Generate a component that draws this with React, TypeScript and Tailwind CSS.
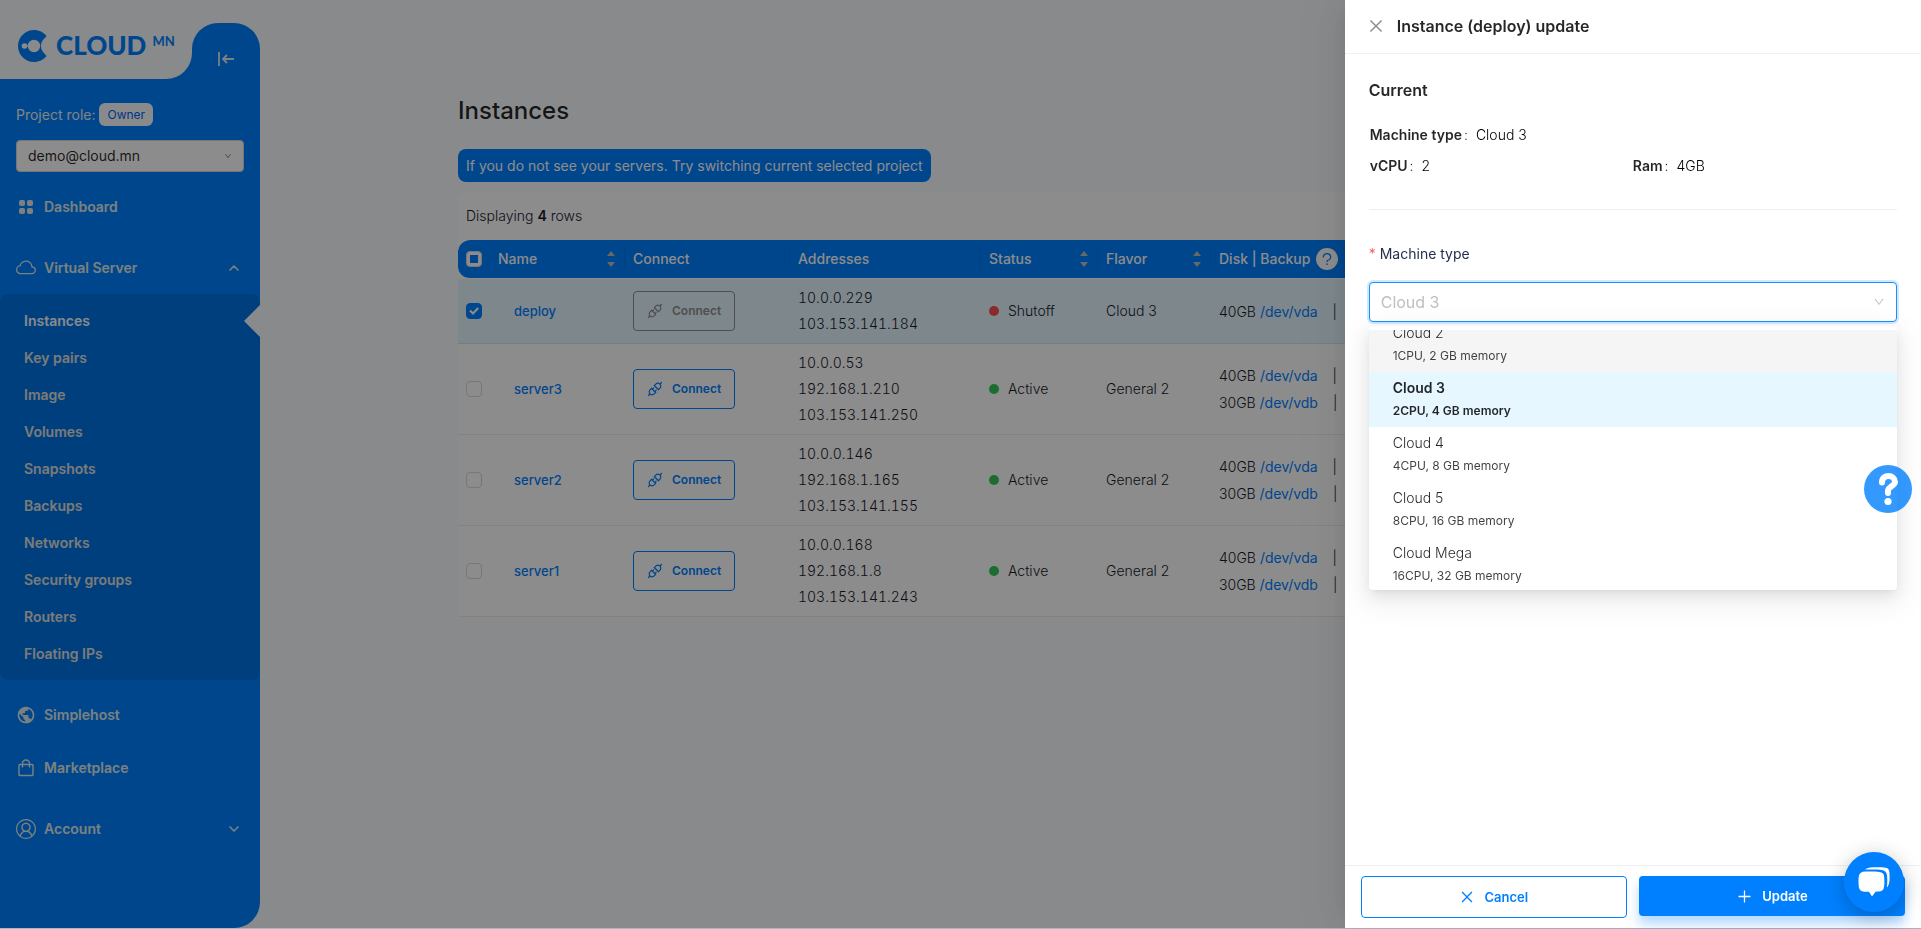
import type { ReactNode } from 'react';
import { AiOutlineApi, AiOutlineClose, AiOutlineDown, AiOutlinePlus, AiOutlineQuestion } from 'react-icons/ai';
import { BsCloud } from 'react-icons/bs';
import { MdPublic } from 'react-icons/md';
import { VscAccount } from 'react-icons/vsc';
import { ChevronDown, ChevronUp } from 'lucide-react';

type Server = {
  name: string;
  addresses: string[];
  status: 'Shutoff' | 'Active';
  flavor: string;
  disks: [string, string][];
  checked: boolean;
};

const oneDisk: [string, string][] = [['40GB', '/dev/vda']];
const twoDisks: [string, string][] = [['40GB', '/dev/vda'], ['30GB', '/dev/vdb']];

const servers: Server[] = [
  { name: 'deploy', addresses: ['10.0.0.229', '103.153.141.184'], status: 'Shutoff', flavor: 'Cloud 3', disks: oneDisk, checked: true },
  { name: 'server3', addresses: ['10.0.0.53', '192.168.1.210', '103.153.141.250'], status: 'Active', flavor: 'General 2', disks: twoDisks, checked: false },
  { name: 'server2', addresses: ['10.0.0.146', '192.168.1.165', '103.153.141.155'], status: 'Active', flavor: 'General 2', disks: twoDisks, checked: false },
  { name: 'server1', addresses: ['10.0.0.168', '192.168.1.8', '103.153.141.243'], status: 'Active', flavor: 'General 2', disks: twoDisks, checked: false },
];

const serverPages = ['Instances', 'Key pairs', 'Image', 'Volumes', 'Snapshots', 'Backups', 'Networks', 'Security groups', 'Routers', 'Floating IPs'];

const machines = [
  { name: 'Cloud 2', detail: '1CPU, 2 GB memory' },
  { name: 'Cloud 3', detail: '2CPU, 4 GB memory' },
  { name: 'Cloud 4', detail: '4CPU, 8 GB memory' },
  { name: 'Cloud 5', detail: '8CPU, 16 GB memory' },
  { name: 'Cloud Mega', detail: '16CPU, 32 GB memory' },
];

function Logo() {
  return (
    <a href="#" className="flex items-center text-[#0080ff]">
      <svg width="30" height="32" viewBox="0 0 30 32" aria-hidden="true">
        <path fill="currentColor" d="M16 0C7.2 0 0 7.200 0 16s7.200 16 16 16c5 0 9.600-2.300 12.600-6l-3.600-4a9.500 9.500 0 0 1 0-12l3.600-4C25.600 2.300 21 0 16 0z" />
        <circle cx="16" cy="16" r="6.200" fill="#f9fbff" />
        <circle cx="6.500" cy="16" r="2.800" fill="#f9fbff" />
        <path d="M9 16h2" stroke="#f9fbff" strokeWidth="1" />
      </svg>
      <span className="ml-2 pb-0.5 font-[Lato] text-[26px] leading-8 font-black">CLOUD</span>
      <span className="ml-1.5 self-start font-[Lato] text-[13px] leading-6 font-bold">MN</span>
    </a>
  );
}

function DashboardIcon() {
  return (
    <svg width="14" height="14" viewBox="0 0 14 14" fill="currentColor" aria-hidden="true">
      <rect width="6" height="6" rx="2" />
      <rect x="8" width="6" height="6" rx="2" />
      <rect y="8" width="6" height="6" rx="2" />
      <rect x="8" y="8" width="6" height="6" rx="2" />
    </svg>
  );
}

function BagIcon() {
  return (
    <svg width="16" height="18" viewBox="0 0 16 18" fill="none" stroke="currentColor" strokeWidth="1.400" aria-hidden="true">
      <rect x="1" y="5.500" width="14" height="11" rx="0.800" />
      <path d="M4.500 8.500V4.500a3.500 3.500 0 0 1 7 0v4" />
    </svg>
  );
}

function NavItem({ icon, label, open }: { icon: ReactNode; label: string; open?: boolean }) {
  return (
    <a href="#" className="flex h-10 items-center px-4 font-semibold text-[#e0ecea]">
      <span className="flex w-5 justify-center">{icon}</span>
      <span className="ml-2 flex-1">{label}</span>
      {open === true && <ChevronUp size={16} strokeWidth={2.5} className="mr-0.5" />}
      {open === false && <ChevronDown size={16} strokeWidth={2.5} className="mr-0.5" />}
    </a>
  );
}

function Sidebar() {
  return (
    <aside className="flex w-[260px] shrink-0 flex-col">
      <div className="flex">
        <div className="flex-1 bg-[#0080ff]">
          <div className="flex h-[79px] items-end rounded-br-[26px] bg-[#f9fbff] pb-4 pl-[18px]">
            <Logo />
          </div>
        </div>
        <div className="w-[68px] bg-[#f9fbff] pt-[23px]">
          <button aria-label="Collapse menu" className="flex h-14 w-full items-end justify-center rounded-t-[26px] bg-[#0080ff] pb-[13px] text-[#e0ecea]">
            <svg width="16" height="14" viewBox="0 0 16 14" fill="none" stroke="currentColor" strokeWidth="1.800" aria-hidden="true">
              <path d="M1 0v14M16 7H5.500M9 3L5 7l4 4" />
            </svg>
          </button>
        </div>
      </div>
      <div className="flex-1 rounded-br-[26px] bg-[#0080ff] pt-6">
        <div className="flex items-center px-4">
          <span className="text-[#ecf0f4]">Project role:</span>
          <span className="ml-1 rounded-md bg-[#f9fbff] px-2 text-xs leading-[23px] text-[#0062f5]">Owner</span>
        </div>
        <div className="mx-4 mt-[14px] grid items-center">
          <select aria-label="Project" className="h-8 appearance-none rounded border border-[#d9d9d9] bg-white px-[11px] text-black/85 [grid-area:1/1]">
            <option>demo@cloud.mn</option>
          </select>
          <AiOutlineDown size={8} className="pointer-events-none mr-3 justify-self-end text-black/50 [grid-area:1/1]" />
        </div>
        <nav>
          <div className="mt-[15px]"><NavItem icon={<DashboardIcon />} label="Dashboard" /></div>
          <div className="mt-[21px]"><NavItem icon={<BsCloud size={20} />} label="Virtual Server" open={true} /></div>
          <ul className="mt-[6px] rounded-lg bg-[#0074e6] py-2">
            {serverPages.map((page) => (
              <li key={page} className="flex h-[37px] items-center justify-between overflow-hidden">
                <a href="#" className={page === 'Instances' ? 'pl-6 font-semibold text-[#f9fbff]' : 'pl-6 font-semibold text-[#e0e0dc]'}>{page}</a>
                {page === 'Instances' && (
                  <svg width="16" height="32" viewBox="0 0 16 32" fill="#f9fbff" aria-hidden="true"><path d="M16 0v32L0 16z" /></svg>
                )}
              </li>
            ))}
          </ul>
          <div className="mt-[15px]"><NavItem icon={<MdPublic size={20} />} label="Simplehost" /></div>
          <div className="mt-[13px]"><NavItem icon={<BagIcon />} label="Marketplace" /></div>
          <div className="mt-[21px]"><NavItem icon={<VscAccount size={20} />} label="Account" open={false} /></div>
        </nav>
      </div>
    </aside>
  );
}

function Sorter() {
  return (
    <svg width="8" height="16" viewBox="0 0 8 16" fill="#bfbfbf" aria-hidden="true">
      <path d="M4 0l4 5H0zM4 16l4-5H0z" />
    </svg>
  );
}

function HeaderCell({ children, sortable = false, divider = true }: { children: ReactNode; sortable?: boolean; divider?: boolean }) {
  return (
    <th className="p-0 font-medium">
      <div className={divider ? 'flex h-[22px] items-center justify-between border-r border-black/5 pr-[9px] pl-2 whitespace-nowrap' : 'flex h-[22px] items-center px-2 whitespace-nowrap'}>
        {children}
        {sortable && <Sorter />}
      </div>
    </th>
  );
}

function InstanceTable() {
  return (
    <table className="w-full table-fixed border-separate border-spacing-0 text-left">
      <colgroup>
        <col className="w-8" />
        <col className="w-[135px]" />
        <col className="w-[165px]" />
        <col className="w-[191px]" />
        <col className="w-[117px]" />
        <col className="w-[113px]" />
        <col />
      </colgroup>
      <thead>
        <tr className="h-[39px] text-white [&>th]:border-b [&>th]:border-transparent [&>th]:bg-[#0080ff] [&>th]:bg-clip-padding">
          <th className="rounded-l-xl p-0 pl-2">
            <span className="grid size-4 place-items-center">
              <input type="checkbox" aria-label="Select all rows" className="size-4 appearance-none rounded border border-[#d9d9d9] bg-white [grid-area:1/1]" />
              <span className="pointer-events-none size-2 bg-[#0080ff] [grid-area:1/1]" />
            </span>
          </th>
          <HeaderCell sortable>Name</HeaderCell>
          <HeaderCell>Connect</HeaderCell>
          <HeaderCell>Addresses</HeaderCell>
          <HeaderCell sortable>Status</HeaderCell>
          <HeaderCell sortable>Flavor</HeaderCell>
          <HeaderCell divider={false}>
            Disk | Backup
            <span className="ml-1.5 grid size-[22px] place-items-center rounded-full bg-white text-[#0080ff]"><AiOutlineQuestion size={16} /></span>
          </HeaderCell>
        </tr>
      </thead>
      <tbody>
        {servers.map((s) => (
          <tr key={s.name} className={s.checked ? 'bg-[#e6f7ff] [&>td]:border-b [&>td]:border-[#d2e6f0]' : '[&>td]:border-b [&>td]:border-[#ededed]'}>
            <td className="p-0 pl-2">
              <span className="grid size-4 place-items-center">
                <input type="checkbox" aria-label={'Select ' + s.name} defaultChecked={s.checked} className="size-4 appearance-none rounded border border-[#d9d9d9] bg-white checked:border-[#0080ff] checked:bg-[#0080ff] [grid-area:1/1]" />
                {s.checked && (
                  <svg width="10" height="8" viewBox="0 0 10 8" fill="none" stroke="#fff" strokeWidth="2" className="pointer-events-none [grid-area:1/1]" aria-hidden="true"><path d="M1 3.500l3 3L9.200 1" /></svg>
                )}
              </span>
            </td>
            <td className="p-0 pl-6 text-[13px] font-medium"><a href="#" className="text-[#0080ff]">{s.name}</a></td>
            <td className="p-0 pl-2">
              <button
                disabled={s.checked}
                className={s.checked
                  ? 'flex h-10 w-[102px] items-center rounded border border-[#8f8f8f] pl-3 text-xs font-semibold text-[#8f8f8f]'
                  : 'flex h-10 w-[102px] items-center rounded border border-[#0080ff] pl-3 text-xs font-semibold text-[#0080ff]'}
              >
                <AiOutlineApi size={18} />
                <span className="ml-2">Connect</span>
              </button>
            </td>
            <td className="p-0 py-[6px] pl-2 leading-[26px] tabular-nums">
              {s.addresses.map((a) => <div key={a}>{a}</div>)}
            </td>
            <td className="p-0 pl-2">
              <div className="flex items-center gap-[9px]">
                <span className={s.status === 'Active' ? 'size-[10px] rounded-full bg-[#34c759]' : 'size-[10px] rounded-full bg-[#ff4d4f]'} />
                {s.status}
              </div>
            </td>
            <td className="p-0 pl-2">{s.flavor}</td>
            <td className="p-0 pl-2 leading-[27px]">
              {s.disks.map(([size, path]) => (
                <div key={path}>{size} <a href="#" className="mr-[15px] font-normal text-[#0080ff]">{path}</a>|</div>
              ))}
            </td>
          </tr>
        ))}
      </tbody>
    </table>
  );
}

function MainContent() {
  return (
    <main className="min-w-0 flex-1">
      <div className="mx-auto max-w-[1265px] pt-24">
        <h1 className="text-2xl leading-[30px] font-medium text-black/85">Instances</h1>
        <p className="mt-[23px] w-fit rounded-lg bg-[#0080ff] px-2 leading-[33px] text-white">
          If you do not see your servers. Try switching current selected project
        </p>
        <section className="mt-[10px] rounded-t-lg bg-white font-light">
          <p className="px-2 leading-12">Displaying <b className="font-semibold">4</b> rows</p>
          <InstanceTable />
        </section>
      </div>
    </main>
  );
}

function Fact({ label, value }: { label: string; value: string }) {
  return (
    <div className="flex leading-[22px]">
      <dt className="font-semibold text-black/85">{label}<span className="mr-2 ml-0.5 font-light">:</span></dt>
      <dd className="font-light text-black">{value}</dd>
    </div>
  );
}

function UpdateDrawer() {
  return (
    <div role="dialog" aria-labelledby="drawer-title" className="fixed top-0 right-0 bottom-px flex w-[30%] flex-col bg-white shadow-[-6px_0_16px_-8px_rgba(0,0,0,0.08),-9px_0_28px_0_rgba(0,0,0,0.05),-12px_0_48px_16px_rgba(0,0,0,0.03)]">
      <header className="flex h-[54px] shrink-0 items-center border-b border-[#f0f0f0] px-6 pb-0.5">
        <button aria-label="Close" className="-ml-0.5 text-[#8c8c8c]"><AiOutlineClose size={18} /></button>
        <h2 id="drawer-title" className="ml-3 text-base font-semibold text-black/85">Instance (deploy) update</h2>
      </header>
      <div className="flex-1 px-6 pt-6">
        <h3 className="text-base leading-6 font-semibold text-black/85">Current</h3>
        <dl className="mt-[22px] grid grid-cols-2 gap-y-[9px] px-px">
          <div className="col-span-2"><Fact label="Machine type" value="Cloud 3" /></div>
          <Fact label="vCPU" value="2" />
          <Fact label="Ram" value="4GB" />
        </dl>
        <hr className="mt-8 border-[#f0f0f0]" />
        <label htmlFor="machine-type" className="mt-[33px] block leading-[22px] text-[#22304c]">
          <span className="mr-1 font-light text-[#ff4d4f]">*</span>Machine type
        </label>
        <div className="relative mt-[17px]">
          <div className="grid items-center">
            <select id="machine-type" className="h-10 appearance-none rounded border border-[#1890ff] bg-white px-[11px] text-base text-[#bfbfbf] shadow-[0_0_0_2px_rgba(24,144,255,0.2)] outline-none [grid-area:1/1]">
              <option>Cloud 3</option>
            </select>
            <AiOutlineDown size={12} className="pointer-events-none mr-3 justify-self-end text-[#bfbfbf] [grid-area:1/1]" />
          </div>
          <div className="absolute inset-x-0 top-11 rounded bg-white py-1 shadow-[0_3px_6px_-4px_rgba(0,0,0,0.12),0_6px_16px_0_rgba(0,0,0,0.08),0_9px_28px_8px_rgba(0,0,0,0.05)]">
            <div className="h-64 overflow-hidden">
              <ul role="listbox" aria-label="Machine type" className="-mt-[13px]">
                {machines.map((m) => (
                  <li
                    key={m.name}
                    role="option"
                    aria-selected={m.name === 'Cloud 3'}
                    className="group h-[55px] px-6 py-[5px] text-black/85 first:bg-[#f5f5f5] aria-selected:bg-[#e6f7ff]"
                  >
                    <div className="leading-[22px] font-light group-aria-selected:font-semibold">{m.name}</div>
                    <div className="text-xs leading-[23px] text-black/75 group-aria-selected:font-semibold group-aria-selected:text-black/85">{m.detail}</div>
                  </li>
                ))}
              </ul>
            </div>
          </div>
        </div>
      </div>
      <footer className="grid grid-cols-2 items-start gap-3 border-t border-[#f0f0f0] px-4 py-[10px]">
        <button className="flex h-[42px] items-center justify-center gap-[9px] rounded border border-[#0080ff] text-[13px] font-semibold text-[#0080ff]">
          <AiOutlineClose size={16} />Cancel
        </button>
        <button className="flex h-10 items-center justify-center gap-[9px] rounded bg-[#0080ff] text-[13px] font-semibold text-white shadow-[0_8px_12px_rgba(0,128,255,0.3)]">
          <AiOutlinePlus size={17} />Update
        </button>
      </footer>
    </div>
  );
}

function FloatingButtons() {
  return (
    <>
      <button aria-label="Help" className="fixed top-1/2 right-[9px] grid size-12 place-items-center rounded-full bg-[#0080ff]/80 text-white">
        <svg width="22" height="34" viewBox="0 0 22 34" fill="none" stroke="currentColor" aria-hidden="true">
          <path d="M5 10.500C5 6 8 4 11.500 4S18 6.500 18 10s-7 5.200-7 8.500V21" strokeWidth="6" strokeLinecap="round" strokeLinejoin="round" />
          <circle cx="11" cy="29.500" r="3.600" fill="currentColor" stroke="none" />
        </svg>
      </button>
      <button aria-label="Chat" className="fixed right-[17px] bottom-[17px] grid size-[60px] place-items-center rounded-full bg-[#0080ff] text-white shadow-[0_4px_20px_rgba(0,0,0,0.25)]">
        <svg width="32" height="30" viewBox="0 0 32 30" fill="currentColor" aria-hidden="true">
          <path d="M13 4.600c5 0 8.500.1 10.400.8C26 6.400 26.400 9 26.400 14.500c0 5-.4 8.200-2.600 9.300-1.400.8-3.800.9-6.300.9L14 29.500l-3-4.700c-3.200 0-6-.1-7.700-.9C.9 22.700.5 19.600.5 14.700.5 9.400.9 6.500 3.300 5.400 5 4.600 8.500 4.600 13 4.600z" />
          <path d="M7 2.600C9.500.4 14 .3 19 .3c4.500 0 8.300-.1 10.300 1 2.200 1.200 2.300 4.400 2.300 8.700 0 4.200-.3 8.300-2.900 10.600.5-2.200.6-4.500.6-7.600 0-4.700-.5-7.600-2.700-8.900-2-1.200-5.600-1.500-10.600-1.500z" />
        </svg>
      </button>
    </>
  );
}

export default function App() {
  return (
    <div className="min-h-screen bg-[#aab6c6] pb-px font-[Inter,sans-serif] text-sm text-[#1a1a2e]">
      <div className="flex min-h-[calc(100vh-1px)] bg-[#f9fbff]">
        <Sidebar />
        <MainContent />
      </div>
      <div className="fixed inset-x-0 top-0 bottom-px bg-black/45" />
      <UpdateDrawer />
      <FloatingButtons />
    </div>
  );
}
